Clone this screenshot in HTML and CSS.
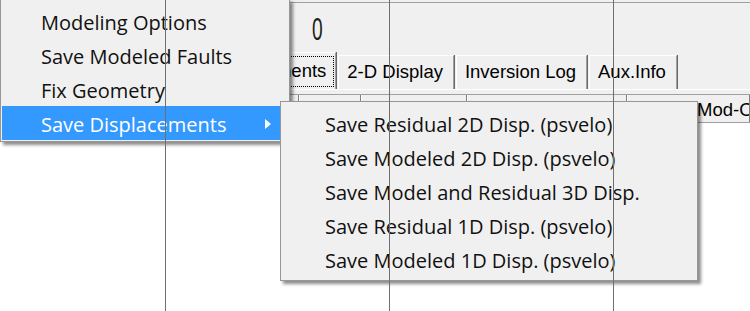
FILE: index.html
```html
<!DOCTYPE html>
<html lang="en">
<head>
    <meta charset="UTF-8">
    <title>Inversion</title>
    <link rel="stylesheet" href="styles.css">
</head>
<body>
    <div class="app">
        <div class="frame-top"></div>
        <div class="counter"><span>0</span></div>
        <div class="tabs">
            <div class="tab active"><span class="focus">Displacements</span></div>
            <div class="tab">2-D Display</div>
            <div class="tab">Inversion Log</div>
            <div class="tab">Aux.Info</div>
        </div>
        <div class="panel">
            <div class="grid-head">
                <div class="col c1"></div>
                <div class="col c2"></div>
                <div class="col c3"></div>
                <div class="col c4"></div>
                <div class="col c5">Mod-Obs</div>
            </div>
            <div class="grid-body"></div>
        </div>
    </div>

    <ul class="menu menu-main">
        <li>Modeling Options</li>
        <li>Save Modeled Faults</li>
        <li>Fix Geometry</li>
        <li class="hot">Save Displacements <i class="arrow"></i></li>
    </ul>

    <ul class="menu menu-sub">
        <li>Save Residual 2D Disp. (psvelo)</li>
        <li>Save Modeled 2D Disp. (psvelo)</li>
        <li>Save Model and Residual 3D Disp.</li>
        <li>Save Residual 1D Disp. (psvelo)</li>
        <li>Save Modeled 1D Disp. (psvelo)</li>
    </ul>

    <div class="guide g1"></div>
    <div class="guide g2"></div>
    <div class="guide g3"></div>
</body>
</html>
```

FILE: styles.css
```css
body {
    margin: 0;
    width: 750px;
    height: 311px;
    overflow: hidden;
    position: relative;
    background: #fff;
    font-family: "Liberation Sans", Arial, sans-serif;
    color: #000;
}
.app {
    display: flex;
    flex-direction: column;
    height: 311px;
    background: #f0f0f0;
}
.frame-top {
    flex: none;
    height: 2px;
    border-bottom: 1px solid #a0a0a0;
}
.counter {
    flex: none;
    height: 39px;
    padding: 10px 0 0 312px;
    font-size: 32px;
    line-height: 32px;
}
.counter span {
    display: inline-block;
    transform: scaleX(0.6);
    transform-origin: left center;
    color: #222;
}

/* tab strip */
.tabs {
    flex: none;
    display: flex;
    align-items: flex-end;
    height: 37px;
    padding-left: 192px;
    font-size: 18.5px;
}
.tab {
    display: flex;
    align-items: center;
    box-sizing: border-box;
    height: 34px;
    margin-left: 2px;
    padding: 0 10px 2px 8px;
    border-top: 1px solid #fff;
    border-left: 1px solid #fff;
    border-right: 1px solid #a0a0a0;
    box-shadow: 1px 0 0 #696969;
    white-space: nowrap;
}
.tab.active {
    height: 37px;
    margin-left: 0;
    padding: 0 1px 0 9px;
}
.focus {
    padding: 3px 7px 4px 2px;
    border: 1px dotted #000;
}

/* grid */
.panel {
    flex: 1;
    display: flex;
    flex-direction: column;
    border-top: 1px solid #fff;
    padding-top: 4px;
}
.grid-head {
    flex: none;
    display: flex;
    height: 27px;
    border-top: 1px solid #a0a0a0;
    border-bottom: 1px solid #a0a0a0;
    font-size: 18.5px;
}
.col {
    flex: none;
    border-left: 1px solid #fff;
    border-right: 1px solid #808080;
}
.c1 { width: 297px; }
.c2 { width: 60px; }
.c3 { width: 104px; }
.c4 { width: 158px; }
.c5 {
    flex: 1;
    padding: 4px 0 0 69px;
    white-space: nowrap;
    overflow: hidden;
}
.grid-body {
    flex: 1;
    background: #fff;
}

/* popup menus */
.menu {
    position: absolute;
    margin: 0;
    list-style: none;
    background: #f0f0f0;
    border: 1px solid #979797;
    box-shadow: 3px 3px 3px rgba(0, 0, 0, .45);
    font-family: "Open Sans", "Noto Sans", sans-serif;
    font-size: 20px;
    color: #111;
}
.menu li {
    display: flex;
    align-items: center;
    box-sizing: border-box;
    height: 34px;
    padding-top: 2px;
    white-space: nowrap;
}
.menu-main {
    left: 0;
    top: -1px;
    width: 285px;
    padding: 4px 2px 1px 1px;
    z-index: 2;
}
.menu-main li {
    padding-left: 39px;
    padding-right: 16px;
}
.menu-main .hot {
    background: #3399ff;
    color: #fff;
}
.arrow {
    margin-left: auto;
    width: 0;
    height: 0;
    border-left: 6px solid #fff;
    border-top: 5px solid transparent;
    border-bottom: 5px solid transparent;
}
.menu-sub {
    left: 280px;
    top: 101px;
    width: 412px;
    padding: 4px 2px 4px 2px;
    z-index: 3;
}
.menu-sub li {
    padding-left: 42px;
}

/* thin guide lines over everything */
.guide {
    position: absolute;
    top: 0;
    bottom: 0;
    width: 1px;
    background: #6f6f6f;
    z-index: 5;
}
.g1 { left: 165px; }
.g2 { left: 389px; }
.g3 { left: 613px; }
```
